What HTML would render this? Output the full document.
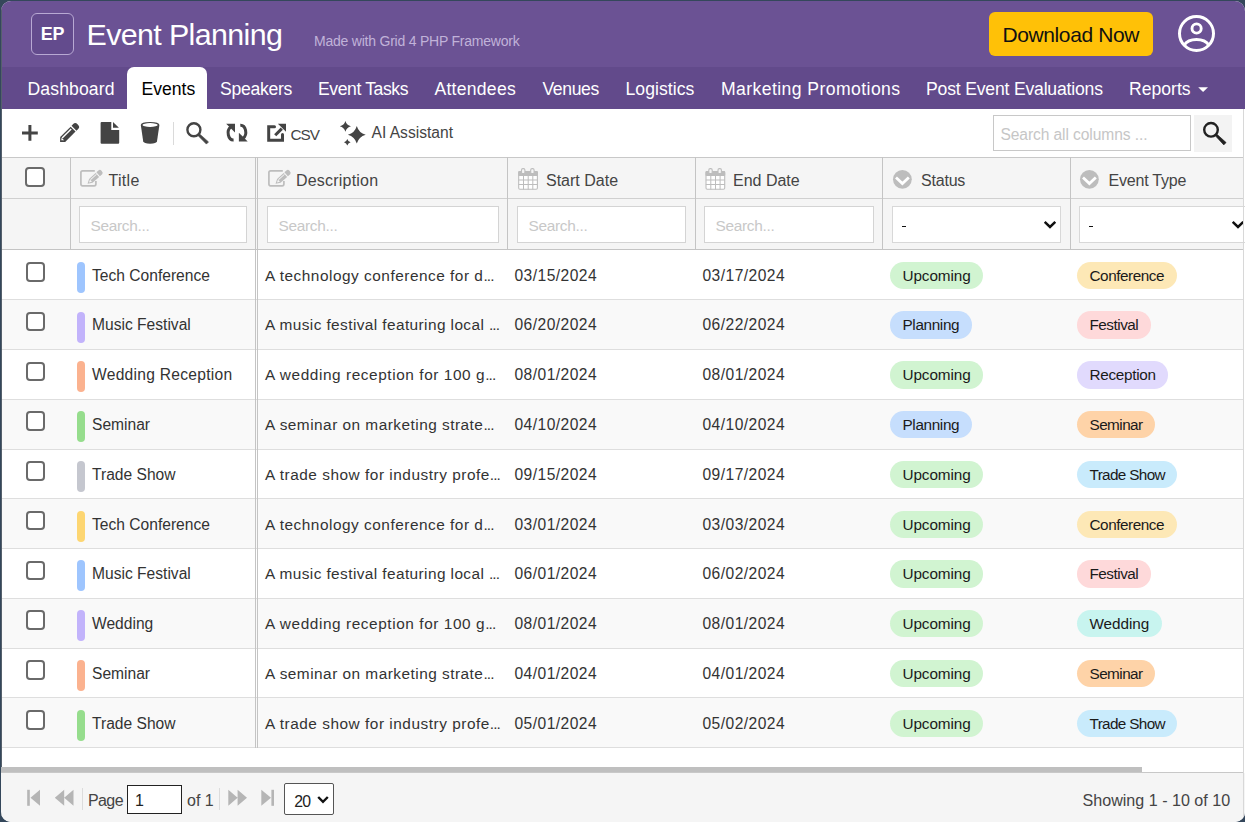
<!DOCTYPE html>
<html><head><meta charset="utf-8">
<style>
*{box-sizing:border-box;margin:0;padding:0}
html,body{width:1245px;height:822px;overflow:hidden}
body{background:#34475b;font-family:"Liberation Sans",sans-serif;position:relative}
#app{position:absolute;left:1px;top:1px;width:1243.5px;height:820.5px;border-radius:10px;overflow:hidden;background:#fff}
#app>div,#app>svg{position:absolute}
.t{white-space:nowrap}
</style></head>
<body>
<div id="app">
<div style="left:0px;top:0px;width:1245px;height:66px;background:#6b5294"></div>
<div style="left:30px;top:12px;width:43.2px;height:42.2px;border:1.9px solid #b8a9d3;border-radius:6px;background:#634b8d"></div>
<div class="t" style="left:29.5px;top:25.5px;width:44px;text-align:center;font-weight:bold;font-size:17.9px;line-height:14px;color:#fff;letter-spacing:-0.1px">EP</div>
<div class="t" style="left:85.5px;top:16.2px;font-size:30.4px;line-height:34px;color:#fff;letter-spacing:-0.62px">Event Planning</div>
<div class="t" style="left:313px;top:31.5px;font-size:14px;line-height:16px;color:#c1b2d9;letter-spacing:-0.22px">Made with Grid 4 PHP Framework</div>
<div style="left:988px;top:11px;width:164px;height:44px;background:#ffc107;border-radius:6px"></div>
<div class="t" style="left:1001.5px;top:23.2px;font-size:21px;line-height:22px;color:#111;letter-spacing:-0.4px">Download Now</div>
<svg style="left:1175px;top:12px" width="41" height="41" viewBox="1176 13 41 41"><circle cx="1196.5" cy="33.5" r="17" fill="none" stroke="#fff" stroke-width="3"/><circle cx="1196.6" cy="28.5" r="4.6" fill="none" stroke="#fff" stroke-width="2.9"/><path d="M1184.2 45 C1189 37.5 1204 37.5 1208.8 45" fill="none" stroke="#fff" stroke-width="3"/></svg>
<div style="left:0px;top:66px;width:1245px;height:42px;background:#624a8b"></div>
<div style="left:126px;top:66px;width:80px;height:42px;background:#fff;border-radius:7px 7px 0 0"></div>
<div class="t" style="left:26.5px;top:79px;font-size:17.6px;line-height:18px;color:#fff;letter-spacing:0.12px">Dashboard</div>
<div class="t" style="left:140.5px;top:79px;font-size:17.6px;line-height:18px;color:#000;letter-spacing:0px">Events</div>
<div class="t" style="left:219px;top:79px;font-size:17.6px;line-height:18px;color:#fff;letter-spacing:-0.28px">Speakers</div>
<div class="t" style="left:317px;top:79px;font-size:17.6px;line-height:18px;color:#fff;letter-spacing:-0.4px">Event Tasks</div>
<div class="t" style="left:433.5px;top:79px;font-size:17.6px;line-height:18px;color:#fff;letter-spacing:0.25px">Attendees</div>
<div class="t" style="left:541.5px;top:79px;font-size:17.6px;line-height:18px;color:#fff;letter-spacing:-0.4px">Venues</div>
<div class="t" style="left:624.5px;top:79px;font-size:17.6px;line-height:18px;color:#fff;letter-spacing:0.05px">Logistics</div>
<div class="t" style="left:720px;top:79px;font-size:17.6px;line-height:18px;color:#fff;letter-spacing:0.42px">Marketing Promotions</div>
<div class="t" style="left:925px;top:79px;font-size:17.6px;line-height:18px;color:#fff;letter-spacing:-0.19px">Post Event Evaluations</div>
<div class="t" style="left:1128px;top:79px;font-size:17.6px;line-height:18px;color:#fff;letter-spacing:0px">Reports</div>
<svg style="left:1196px;top:84px" width="13" height="9" viewBox="1197 85 13 9"><path d="M1198.2 87.2 L1203.1 92.1 L1208 87.2Z" fill="#fff"/></svg>
<div style="left:0px;top:108px;width:1243px;height:48px;background:#fff"></div>
<svg style="left:19px;top:122px" width="20" height="20" viewBox="20 123 20 20"><path d="M29.9 125V140.7M22 132.9H37.8" stroke="#444" stroke-width="3"/></svg>
<svg style="left:57px;top:119px" width="24" height="25" viewBox="58 120 24 25"><g transform="matrix(0.7071 -0.7071 0.7071 0.7071 101.1 101.1)"><path d="M-58 0 L-54.3 -3.5 H-39.6 V3.5 H-54.3Z" fill="#444"/><path d="M-55.9 -0.4 L-53.9 -2.1 V1.6Z" fill="#fff"/><rect x="-53.6" y="-2.2" width="12.8" height="1.4" fill="#fff"/><path d="M-38.3 -3.5 H-35.6 Q-33 -3.5 -33 0 Q-33 3.5 -35.6 3.5 H-38.3Z" fill="#444"/></g></svg>
<svg style="left:98px;top:120px" width="22" height="24" viewBox="99 121 22 24"><path d="M101.6 122 H111.3 V129.9 H119.2 V142.7 Q119.2 143.7 118.2 143.7 H101.6 Q100.6 143.7 100.6 142.7 V123 Q100.6 122 101.6 122Z" fill="#444"/><path d="M113 122 L118.9 127.8 H113Z" fill="#444"/></svg>
<svg style="left:138px;top:119px" width="22" height="26" viewBox="139 120 22 26"><path d="M140.8 125 Q140.8 122 150.1 122 Q159.4 122 159.4 125 L157 141.3 Q156.5 143.7 150.1 143.7 Q143.7 143.7 143.2 141.3Z" fill="#444"/><ellipse cx="150.1" cy="125" rx="7.6" ry="1.9" fill="#fff"/></svg>
<div style="left:171.5px;top:121px;width:1px;height:23px;background:#dadada"></div>
<svg style="left:183px;top:119px" width="26" height="26" viewBox="184 120 26 26"><circle cx="193.9" cy="129.7" r="6.5" fill="none" stroke="#444" stroke-width="2.4"/><path d="M197.7 135.3 L199.3 133.7 L208.5 141.9 L206.4 144.1Z" fill="#444" stroke="#444" stroke-width="0.6" stroke-linejoin="round"/></svg>
<svg style="left:223px;top:120px" width="26" height="24" viewBox="224 121 26 24"><path d="M230.85 126.9 A5.3 7 0 0 0 233.6 140" fill="none" stroke="#444" stroke-width="3"/><path d="M226.2 123.8 H235 V132.5Z" fill="#444"/><g transform="rotate(180 236.95 132.65)"><path d="M230.85 126.9 A5.3 7 0 0 0 233.6 140" fill="none" stroke="#444" stroke-width="3"/><path d="M226.2 123.8 H235 V132.5Z" fill="#444"/></g></svg>
<svg style="left:264px;top:120px" width="24" height="24" viewBox="265 121 24 24"><path d="M274.5 126.7 H268.7 V140.3 H282.5 V134.6" fill="none" stroke="#444" stroke-width="3" stroke-linecap="round" stroke-linejoin="miter"/><path d="M275.2 135.2 L281.8 128.6" stroke="#444" stroke-width="3"/><path d="M277.9 123.7 H286 V131.8Z" fill="#444"/></svg>
<div class="t" style="left:289.5px;top:125.5px;font-size:15.3px;line-height:16px;color:#444;letter-spacing:-1px">CSV</div>
<svg style="left:336px;top:117px" width="32" height="30" viewBox="337 118 32 30"><path d="M345.40 120.90 Q346.63 125.11 351.00 126.30 Q346.63 127.49 345.40 131.70 Q344.17 127.49 339.80 126.30 Q344.17 125.11 345.40 120.90Z M356.80 126.00 Q358.76 132.86 365.70 134.80 Q358.76 136.74 356.80 143.60 Q354.84 136.74 347.90 134.80 Q354.84 132.86 356.80 126.00Z M347.30 138.90 Q348.03 141.47 350.60 142.20 Q348.03 142.93 347.30 145.50 Q346.57 142.93 344.00 142.20 Q346.57 141.47 347.30 138.90Z" fill="#444"/></svg>
<div class="t" style="left:370.5px;top:124px;font-size:15.6px;line-height:16px;color:#444">AI Assistant</div>
<div style="left:992px;top:114px;width:198px;height:36px;border:1px solid #c8c8c8;background:#fff"></div>
<div class="t" style="left:999.5px;top:126px;font-size:15.6px;line-height:16px;color:#c6c6c6;letter-spacing:-0.1px">Search all columns ...</div>
<div style="left:1193px;top:114px;width:38px;height:37px;background:#f3f3f3"></div>
<svg style="left:1199px;top:118px" width="28" height="28" viewBox="1200 119 28 28"><circle cx="1211" cy="129.8" r="6.8" fill="none" stroke="#222" stroke-width="2.4"/><path d="M1215.1 135.6 L1216.7 134 L1226.1 142.6 L1223.8 144.9Z" fill="#222" stroke="#222" stroke-width="0.6" stroke-linejoin="round"/></svg>
<div style="left:0px;top:156px;width:1243px;height:92px;background:#f5f5f5"></div>
<div style="left:0px;top:156px;width:1243px;height:1px;background:#c8c8c8"></div>
<div style="left:0px;top:197px;width:1243px;height:1px;background:#d0d0d0"></div>
<div style="left:0px;top:248px;width:1243px;height:1.5px;background:#c4c4c4"></div>
<div style="left:69px;top:156px;width:1.2px;height:92px;background:#c4c4c4"></div>
<div style="left:506px;top:156px;width:1.2px;height:92px;background:#c4c4c4"></div>
<div style="left:694px;top:156px;width:1.2px;height:92px;background:#c4c4c4"></div>
<div style="left:881px;top:156px;width:1.2px;height:92px;background:#c4c4c4"></div>
<div style="left:1069px;top:156px;width:1.2px;height:92px;background:#c4c4c4"></div>
<div style="left:24px;top:166px;width:19.5px;height:19.5px;border:2.1px solid #6a6a6a;border-radius:4px;background:#fff"></div>
<svg style="left:77px;top:166px" width="26" height="22" viewBox="78 167 26 22"><g transform="translate(0 0)"><path d="M94.8 170.8 H82.6 Q80.9 170.8 80.9 172.5 V184.1 Q80.9 185.8 82.6 185.8 H94.2 Q95.9 185.8 95.9 184.1 V181" fill="none" stroke="#bdbdbd" stroke-width="1.7"/><g transform="translate(87.6 183.8) rotate(-42)"><path d="M0 0 L4.3 -2.6 H13.2 V2.6 H4.3Z" fill="#bdbdbd"/><path d="M1.9 -0.1 L4.6 -1.5 V1.4Z" fill="#f5f5f5"/><rect x="5" y="-1.6" width="8" height="0.9" fill="#f5f5f5"/><path d="M14.2 -2.6 H17.3 Q19 -2.6 19 0 Q19 2.6 17.3 2.6 H14.2Z" fill="#bdbdbd"/></g></g></svg>
<div class="t" style="left:107.5px;top:170.5px;font-size:16px;line-height:18px;color:#444;letter-spacing:0.3px">Title</div>
<svg style="left:265px;top:166px" width="26" height="22" viewBox="266 167 26 22"><g transform="translate(188 0)"><path d="M94.8 170.8 H82.6 Q80.9 170.8 80.9 172.5 V184.1 Q80.9 185.8 82.6 185.8 H94.2 Q95.9 185.8 95.9 184.1 V181" fill="none" stroke="#bdbdbd" stroke-width="1.7"/><g transform="translate(87.6 183.8) rotate(-42)"><path d="M0 0 L4.3 -2.6 H13.2 V2.6 H4.3Z" fill="#bdbdbd"/><path d="M1.9 -0.1 L4.6 -1.5 V1.4Z" fill="#f5f5f5"/><rect x="5" y="-1.6" width="8" height="0.9" fill="#f5f5f5"/><path d="M14.2 -2.6 H17.3 Q19 -2.6 19 0 Q19 2.6 17.3 2.6 H14.2Z" fill="#bdbdbd"/></g></g></svg>
<div class="t" style="left:295px;top:170.5px;font-size:16px;line-height:18px;color:#444;letter-spacing:0.2px">Description</div>
<svg style="left:515px;top:165px" width="24" height="26" viewBox="516 166 24 26"><g transform="translate(0 0)"><rect x="518.7" y="171.6" width="18.7" height="17.6" rx="1.2" fill="#fff" stroke="#bdbdbd" stroke-width="1.1"/><rect x="518.2" y="171.1" width="19.7" height="4.8" rx="1" fill="#bdbdbd"/><path d="M523.5 175.5V189.5M528.2 175.5V189.5M532.8 175.5V189.5M518.5 180H537.5M518.5 184.5H537.5" stroke="#bdbdbd" stroke-width="1"/><rect x="521.5" y="168.6" width="3.4" height="5" rx="1.4" fill="#f5f5f5" stroke="#bdbdbd" stroke-width="1.1"/><rect x="530.7" y="168.6" width="3.4" height="5" rx="1.4" fill="#f5f5f5" stroke="#bdbdbd" stroke-width="1.1"/></g></svg>
<div class="t" style="left:545px;top:170.5px;font-size:16px;line-height:18px;color:#444">Start Date</div>
<svg style="left:702px;top:165px" width="24" height="26" viewBox="703 166 24 26"><g transform="translate(187.3 0)"><rect x="518.7" y="171.6" width="18.7" height="17.6" rx="1.2" fill="#fff" stroke="#bdbdbd" stroke-width="1.1"/><rect x="518.2" y="171.1" width="19.7" height="4.8" rx="1" fill="#bdbdbd"/><path d="M523.5 175.5V189.5M528.2 175.5V189.5M532.8 175.5V189.5M518.5 180H537.5M518.5 184.5H537.5" stroke="#bdbdbd" stroke-width="1"/><rect x="521.5" y="168.6" width="3.4" height="5" rx="1.4" fill="#f5f5f5" stroke="#bdbdbd" stroke-width="1.1"/><rect x="530.7" y="168.6" width="3.4" height="5" rx="1.4" fill="#f5f5f5" stroke="#bdbdbd" stroke-width="1.1"/></g></svg>
<div class="t" style="left:732px;top:170.5px;font-size:16px;line-height:18px;color:#444">End Date</div>
<svg style="left:890px;top:167px" width="23" height="23" viewBox="891 168 23 23"><circle cx="902.4" cy="179.3" r="9.4" fill="#bdbdbd"/><path d="M896 177.6 L902.4 183.6 L908.8 177.6" fill="none" stroke="#fff" stroke-width="2.8"/></svg>
<div class="t" style="left:920px;top:170.5px;font-size:16px;line-height:18px;color:#444;letter-spacing:-0.2px">Status</div>
<svg style="left:1077px;top:167px" width="23" height="23" viewBox="1078 168 23 23"><circle cx="1089.4" cy="179.3" r="9.4" fill="#bdbdbd"/><path d="M1083 177.6 L1089.4 183.6 L1095.8 177.6" fill="none" stroke="#fff" stroke-width="2.8"/></svg>
<div class="t" style="left:1107.5px;top:170.5px;font-size:16px;line-height:18px;color:#444;letter-spacing:-0.2px">Event Type</div>
<div style="left:78px;top:205px;width:168px;height:37px;border:1px solid #d4d4d4;background:#fff"></div>
<div class="t" style="left:89.5px;top:217px;font-size:15.4px;line-height:16px;color:#c8c8c8;letter-spacing:-0.3px">Search...</div>
<div style="left:266px;top:205px;width:232px;height:37px;border:1px solid #d4d4d4;background:#fff"></div>
<div class="t" style="left:277.5px;top:217px;font-size:15.4px;line-height:16px;color:#c8c8c8;letter-spacing:-0.3px">Search...</div>
<div style="left:516px;top:205px;width:169px;height:37px;border:1px solid #d4d4d4;background:#fff"></div>
<div class="t" style="left:527.5px;top:217px;font-size:15.4px;line-height:16px;color:#c8c8c8;letter-spacing:-0.3px">Search...</div>
<div style="left:703px;top:205px;width:170px;height:37px;border:1px solid #d4d4d4;background:#fff"></div>
<div class="t" style="left:714.5px;top:217px;font-size:15.4px;line-height:16px;color:#c8c8c8;letter-spacing:-0.3px">Search...</div>
<div style="left:891px;top:205px;width:169px;height:37px;border:1.5px solid #d8d8d8;background:#fff"></div>
<div style="left:900.5px;top:224.9px;width:4.8px;height:1.3px;background:#111"></div>
<svg style="left:1042px;top:218px" width="14" height="11" viewBox="1043 219 14 11"><path d="M1044.7 221.8 L1050 226.9 L1055.3 221.8" fill="none" stroke="#111" stroke-width="2.5"/></svg>
<div style="left:1078px;top:205px;width:181px;height:37px;border:1.5px solid #d8d8d8;background:#fff"></div>
<div style="left:1087.5px;top:224.9px;width:4.8px;height:1.3px;background:#111"></div>
<svg style="left:1230px;top:218px" width="14" height="11" viewBox="1231 219 14 11"><path d="M1232.7 221.8 L1238 226.9 L1243.3 221.8" fill="none" stroke="#111" stroke-width="2.5"/></svg>
<div style="left:0px;top:249.4px;width:1243px;height:49.78px;background:#fff"></div>
<div style="left:0px;top:298.18px;width:1243px;height:1px;background:#dedede"></div>
<div style="left:24.8px;top:261px;width:19.5px;height:19.5px;border:2.1px solid #6a6a6a;border-radius:4px;background:#fff"></div>
<div style="left:76px;top:260.8px;width:8px;height:31px;background:#9ec5fe;border-radius:4px"></div>
<div class="t" style="left:91px;top:266.7px;font-size:15.6px;line-height:16px;color:#333;letter-spacing:0px">Tech Conference</div>
<div class="t" style="left:264px;top:266.7px;font-size:15.4px;line-height:16px;color:#333;letter-spacing:0.51px">A technology conference for d<span style="letter-spacing:-0.9px">...</span></div>
<div class="t" style="left:513.5px;top:266.7px;font-size:15.6px;line-height:16px;color:#333;letter-spacing:0.45px">03/15/2024</div>
<div class="t" style="left:701.5px;top:266.7px;font-size:15.6px;line-height:16px;color:#333;letter-spacing:0.45px">03/17/2024</div>
<div class="t" style="left:889px;top:260.6px;height:27.4px;border-radius:13.7px;background:#d1f4d1;font-size:15.3px;line-height:27px;padding:0 12.5px;color:#1a1a1a;letter-spacing:-0.1px">Upcoming</div>
<div class="t" style="left:1076px;top:260.6px;height:27.4px;border-radius:13.7px;background:#fde8b6;font-size:15.3px;line-height:27px;padding:0 12.5px;color:#1a1a1a;letter-spacing:-0.45px">Conference</div>
<div style="left:0px;top:299.18px;width:1243px;height:49.78px;background:#f9f9f9"></div>
<div style="left:0px;top:347.96px;width:1243px;height:1px;background:#dedede"></div>
<div style="left:24.8px;top:310.78px;width:19.5px;height:19.5px;border:2.1px solid #6a6a6a;border-radius:4px;background:#fff"></div>
<div style="left:76px;top:310.58px;width:8px;height:31px;background:#c2b3fb;border-radius:4px"></div>
<div class="t" style="left:91px;top:316.48px;font-size:15.6px;line-height:16px;color:#333;letter-spacing:0px">Music Festival</div>
<div class="t" style="left:264px;top:316.48px;font-size:15.4px;line-height:16px;color:#333;letter-spacing:0.41px">A music festival featuring local <span style="letter-spacing:-0.9px">...</span></div>
<div class="t" style="left:513.5px;top:316.48px;font-size:15.6px;line-height:16px;color:#333;letter-spacing:0.45px">06/20/2024</div>
<div class="t" style="left:701.5px;top:316.48px;font-size:15.6px;line-height:16px;color:#333;letter-spacing:0.45px">06/22/2024</div>
<div class="t" style="left:889px;top:310.38px;height:27.4px;border-radius:13.7px;background:#c6defd;font-size:15.3px;line-height:27px;padding:0 12.5px;color:#1a1a1a;letter-spacing:-0.35px">Planning</div>
<div class="t" style="left:1076px;top:310.38px;height:27.4px;border-radius:13.7px;background:#fed9da;font-size:15.3px;line-height:27px;padding:0 12.5px;color:#1a1a1a;letter-spacing:-0.5px">Festival</div>
<div style="left:0px;top:348.96px;width:1243px;height:49.78px;background:#fff"></div>
<div style="left:0px;top:397.74px;width:1243px;height:1px;background:#dedede"></div>
<div style="left:24.8px;top:360.56px;width:19.5px;height:19.5px;border:2.1px solid #6a6a6a;border-radius:4px;background:#fff"></div>
<div style="left:76px;top:360.36px;width:8px;height:31px;background:#fbb28f;border-radius:4px"></div>
<div class="t" style="left:91px;top:366.26px;font-size:15.6px;line-height:16px;color:#333;letter-spacing:0.27px">Wedding Reception</div>
<div class="t" style="left:264px;top:366.26px;font-size:15.4px;line-height:16px;color:#333;letter-spacing:0.57px">A wedding reception for 100 g<span style="letter-spacing:-0.9px">...</span></div>
<div class="t" style="left:513.5px;top:366.26px;font-size:15.6px;line-height:16px;color:#333;letter-spacing:0.45px">08/01/2024</div>
<div class="t" style="left:701.5px;top:366.26px;font-size:15.6px;line-height:16px;color:#333;letter-spacing:0.45px">08/01/2024</div>
<div class="t" style="left:889px;top:360.16px;height:27.4px;border-radius:13.7px;background:#d1f4d1;font-size:15.3px;line-height:27px;padding:0 12.5px;color:#1a1a1a;letter-spacing:-0.1px">Upcoming</div>
<div class="t" style="left:1076px;top:360.16px;height:27.4px;border-radius:13.7px;background:#e1dafd;font-size:15.3px;line-height:27px;padding:0 12.5px;color:#1a1a1a;letter-spacing:-0.3px">Reception</div>
<div style="left:0px;top:398.74px;width:1243px;height:49.78px;background:#f9f9f9"></div>
<div style="left:0px;top:447.52px;width:1243px;height:1px;background:#dedede"></div>
<div style="left:24.8px;top:410.34px;width:19.5px;height:19.5px;border:2.1px solid #6a6a6a;border-radius:4px;background:#fff"></div>
<div style="left:76px;top:410.14px;width:8px;height:31px;background:#96dd8d;border-radius:4px"></div>
<div class="t" style="left:91px;top:416.04px;font-size:15.6px;line-height:16px;color:#333;letter-spacing:0px">Seminar</div>
<div class="t" style="left:264px;top:416.04px;font-size:15.4px;line-height:16px;color:#333;letter-spacing:0.48px">A seminar on marketing strate<span style="letter-spacing:-0.9px">...</span></div>
<div class="t" style="left:513.5px;top:416.04px;font-size:15.6px;line-height:16px;color:#333;letter-spacing:0.45px">04/10/2024</div>
<div class="t" style="left:701.5px;top:416.04px;font-size:15.6px;line-height:16px;color:#333;letter-spacing:0.45px">04/10/2024</div>
<div class="t" style="left:889px;top:409.94px;height:27.4px;border-radius:13.7px;background:#c6defd;font-size:15.3px;line-height:27px;padding:0 12.5px;color:#1a1a1a;letter-spacing:-0.35px">Planning</div>
<div class="t" style="left:1076px;top:409.94px;height:27.4px;border-radius:13.7px;background:#fed3a8;font-size:15.3px;line-height:27px;padding:0 12.5px;color:#1a1a1a;letter-spacing:-0.55px">Seminar</div>
<div style="left:0px;top:448.52px;width:1243px;height:49.78px;background:#fff"></div>
<div style="left:0px;top:497.3px;width:1243px;height:1px;background:#dedede"></div>
<div style="left:24.8px;top:460.12px;width:19.5px;height:19.5px;border:2.1px solid #6a6a6a;border-radius:4px;background:#fff"></div>
<div style="left:76px;top:459.92px;width:8px;height:31px;background:#c5c7cf;border-radius:4px"></div>
<div class="t" style="left:91px;top:465.82px;font-size:15.6px;line-height:16px;color:#333;letter-spacing:0px">Trade Show</div>
<div class="t" style="left:264px;top:465.82px;font-size:15.4px;line-height:16px;color:#333;letter-spacing:0.52px">A trade show for industry profe<span style="letter-spacing:-0.9px">...</span></div>
<div class="t" style="left:513.5px;top:465.82px;font-size:15.6px;line-height:16px;color:#333;letter-spacing:0.45px">09/15/2024</div>
<div class="t" style="left:701.5px;top:465.82px;font-size:15.6px;line-height:16px;color:#333;letter-spacing:0.45px">09/17/2024</div>
<div class="t" style="left:889px;top:459.72px;height:27.4px;border-radius:13.7px;background:#d1f4d1;font-size:15.3px;line-height:27px;padding:0 12.5px;color:#1a1a1a;letter-spacing:-0.1px">Upcoming</div>
<div class="t" style="left:1076px;top:459.72px;height:27.4px;border-radius:13.7px;background:#c9ebfc;font-size:15.3px;line-height:27px;padding:0 12.5px;color:#1a1a1a;letter-spacing:-0.65px">Trade Show</div>
<div style="left:0px;top:498.3px;width:1243px;height:49.78px;background:#f9f9f9"></div>
<div style="left:0px;top:547.08px;width:1243px;height:1px;background:#dedede"></div>
<div style="left:24.8px;top:509.9px;width:19.5px;height:19.5px;border:2.1px solid #6a6a6a;border-radius:4px;background:#fff"></div>
<div style="left:76px;top:509.7px;width:8px;height:31px;background:#fdd672;border-radius:4px"></div>
<div class="t" style="left:91px;top:515.6px;font-size:15.6px;line-height:16px;color:#333;letter-spacing:0px">Tech Conference</div>
<div class="t" style="left:264px;top:515.6px;font-size:15.4px;line-height:16px;color:#333;letter-spacing:0.51px">A technology conference for d<span style="letter-spacing:-0.9px">...</span></div>
<div class="t" style="left:513.5px;top:515.6px;font-size:15.6px;line-height:16px;color:#333;letter-spacing:0.45px">03/01/2024</div>
<div class="t" style="left:701.5px;top:515.6px;font-size:15.6px;line-height:16px;color:#333;letter-spacing:0.45px">03/03/2024</div>
<div class="t" style="left:889px;top:509.5px;height:27.4px;border-radius:13.7px;background:#d1f4d1;font-size:15.3px;line-height:27px;padding:0 12.5px;color:#1a1a1a;letter-spacing:-0.1px">Upcoming</div>
<div class="t" style="left:1076px;top:509.5px;height:27.4px;border-radius:13.7px;background:#fde8b6;font-size:15.3px;line-height:27px;padding:0 12.5px;color:#1a1a1a;letter-spacing:-0.45px">Conference</div>
<div style="left:0px;top:548.08px;width:1243px;height:49.78px;background:#fff"></div>
<div style="left:0px;top:596.86px;width:1243px;height:1px;background:#dedede"></div>
<div style="left:24.8px;top:559.68px;width:19.5px;height:19.5px;border:2.1px solid #6a6a6a;border-radius:4px;background:#fff"></div>
<div style="left:76px;top:559.48px;width:8px;height:31px;background:#9ec5fe;border-radius:4px"></div>
<div class="t" style="left:91px;top:565.38px;font-size:15.6px;line-height:16px;color:#333;letter-spacing:0px">Music Festival</div>
<div class="t" style="left:264px;top:565.38px;font-size:15.4px;line-height:16px;color:#333;letter-spacing:0.41px">A music festival featuring local <span style="letter-spacing:-0.9px">...</span></div>
<div class="t" style="left:513.5px;top:565.38px;font-size:15.6px;line-height:16px;color:#333;letter-spacing:0.45px">06/01/2024</div>
<div class="t" style="left:701.5px;top:565.38px;font-size:15.6px;line-height:16px;color:#333;letter-spacing:0.45px">06/02/2024</div>
<div class="t" style="left:889px;top:559.28px;height:27.4px;border-radius:13.7px;background:#d1f4d1;font-size:15.3px;line-height:27px;padding:0 12.5px;color:#1a1a1a;letter-spacing:-0.1px">Upcoming</div>
<div class="t" style="left:1076px;top:559.28px;height:27.4px;border-radius:13.7px;background:#fed9da;font-size:15.3px;line-height:27px;padding:0 12.5px;color:#1a1a1a;letter-spacing:-0.5px">Festival</div>
<div style="left:0px;top:597.86px;width:1243px;height:49.78px;background:#f9f9f9"></div>
<div style="left:0px;top:646.64px;width:1243px;height:1px;background:#dedede"></div>
<div style="left:24.8px;top:609.46px;width:19.5px;height:19.5px;border:2.1px solid #6a6a6a;border-radius:4px;background:#fff"></div>
<div style="left:76px;top:609.26px;width:8px;height:31px;background:#c2b3fb;border-radius:4px"></div>
<div class="t" style="left:91px;top:615.16px;font-size:15.6px;line-height:16px;color:#333;letter-spacing:0px">Wedding</div>
<div class="t" style="left:264px;top:615.16px;font-size:15.4px;line-height:16px;color:#333;letter-spacing:0.57px">A wedding reception for 100 g<span style="letter-spacing:-0.9px">...</span></div>
<div class="t" style="left:513.5px;top:615.16px;font-size:15.6px;line-height:16px;color:#333;letter-spacing:0.45px">08/01/2024</div>
<div class="t" style="left:701.5px;top:615.16px;font-size:15.6px;line-height:16px;color:#333;letter-spacing:0.45px">08/01/2024</div>
<div class="t" style="left:889px;top:609.06px;height:27.4px;border-radius:13.7px;background:#d1f4d1;font-size:15.3px;line-height:27px;padding:0 12.5px;color:#1a1a1a;letter-spacing:-0.1px">Upcoming</div>
<div class="t" style="left:1076px;top:609.06px;height:27.4px;border-radius:13.7px;background:#c8f4ef;font-size:15.3px;line-height:27px;padding:0 12.5px;color:#1a1a1a;letter-spacing:-0.05px">Wedding</div>
<div style="left:0px;top:647.64px;width:1243px;height:49.78px;background:#fff"></div>
<div style="left:0px;top:696.42px;width:1243px;height:1px;background:#dedede"></div>
<div style="left:24.8px;top:659.24px;width:19.5px;height:19.5px;border:2.1px solid #6a6a6a;border-radius:4px;background:#fff"></div>
<div style="left:76px;top:659.04px;width:8px;height:31px;background:#fbb28f;border-radius:4px"></div>
<div class="t" style="left:91px;top:664.94px;font-size:15.6px;line-height:16px;color:#333;letter-spacing:0px">Seminar</div>
<div class="t" style="left:264px;top:664.94px;font-size:15.4px;line-height:16px;color:#333;letter-spacing:0.48px">A seminar on marketing strate<span style="letter-spacing:-0.9px">...</span></div>
<div class="t" style="left:513.5px;top:664.94px;font-size:15.6px;line-height:16px;color:#333;letter-spacing:0.45px">04/01/2024</div>
<div class="t" style="left:701.5px;top:664.94px;font-size:15.6px;line-height:16px;color:#333;letter-spacing:0.45px">04/01/2024</div>
<div class="t" style="left:889px;top:658.84px;height:27.4px;border-radius:13.7px;background:#d1f4d1;font-size:15.3px;line-height:27px;padding:0 12.5px;color:#1a1a1a;letter-spacing:-0.1px">Upcoming</div>
<div class="t" style="left:1076px;top:658.84px;height:27.4px;border-radius:13.7px;background:#fed3a8;font-size:15.3px;line-height:27px;padding:0 12.5px;color:#1a1a1a;letter-spacing:-0.55px">Seminar</div>
<div style="left:0px;top:697.42px;width:1243px;height:49.78px;background:#f9f9f9"></div>
<div style="left:0px;top:746.2px;width:1243px;height:1px;background:#dedede"></div>
<div style="left:24.8px;top:709.02px;width:19.5px;height:19.5px;border:2.1px solid #6a6a6a;border-radius:4px;background:#fff"></div>
<div style="left:76px;top:708.82px;width:8px;height:31px;background:#96dd8d;border-radius:4px"></div>
<div class="t" style="left:91px;top:714.72px;font-size:15.6px;line-height:16px;color:#333;letter-spacing:0px">Trade Show</div>
<div class="t" style="left:264px;top:714.72px;font-size:15.4px;line-height:16px;color:#333;letter-spacing:0.52px">A trade show for industry profe<span style="letter-spacing:-0.9px">...</span></div>
<div class="t" style="left:513.5px;top:714.72px;font-size:15.6px;line-height:16px;color:#333;letter-spacing:0.45px">05/01/2024</div>
<div class="t" style="left:701.5px;top:714.72px;font-size:15.6px;line-height:16px;color:#333;letter-spacing:0.45px">05/02/2024</div>
<div class="t" style="left:889px;top:708.62px;height:27.4px;border-radius:13.7px;background:#d1f4d1;font-size:15.3px;line-height:27px;padding:0 12.5px;color:#1a1a1a;letter-spacing:-0.1px">Upcoming</div>
<div class="t" style="left:1076px;top:708.62px;height:27.4px;border-radius:13.7px;background:#c9ebfc;font-size:15.3px;line-height:27px;padding:0 12.5px;color:#1a1a1a;letter-spacing:-0.65px">Trade Show</div>
<div style="left:254px;top:156px;width:1px;height:591px;background:#c4c4c4"></div>
<div style="left:256px;top:156px;width:1px;height:591px;background:#c4c4c4"></div>
<div style="left:0px;top:-1px;width:0.7px;height:822px;background:#55606c"></div>
<div style="left:0px;top:772px;width:1245px;height:50px;background:#f5f5f5"></div>
<div style="left:0px;top:766px;width:1141px;height:5.3px;background:#bfbfbf"></div>
<div style="left:0px;top:771.2px;width:1243px;height:1px;background:#c8c8c8"></div>
<svg style="left:24px;top:787px" width="18" height="20" viewBox="25 788 18 20"><rect x="27.2" y="789.8" width="2.6" height="16" fill="#b5b5b5"/><path d="M40 789.8 V805.8 L30.5 797.8Z" fill="#b5b5b5"/></svg>
<svg style="left:52px;top:787px" width="22" height="20" viewBox="53 788 22 20"><path d="M64.2 789.8 V805.8 L54.8 797.8Z M73.5 789.8 V805.8 L64.2 797.8Z" fill="#b5b5b5"/></svg>
<div style="left:80.5px;top:787px;width:1.2px;height:22px;background:#dcdcdc"></div>
<div class="t" style="left:87px;top:792.2px;font-size:16px;line-height:16px;color:#444;letter-spacing:-0.6px">Page</div>
<div style="left:126px;top:783.5px;width:55px;height:29.5px;border:1.6px solid #222;background:#fff"></div>
<div class="t" style="left:134px;top:792.2px;font-size:16px;line-height:16px;color:#222">1</div>
<div class="t" style="left:186px;top:792.2px;font-size:16px;line-height:16px;color:#444">of 1</div>
<div style="left:217.5px;top:787px;width:1.2px;height:22px;background:#dcdcdc"></div>
<svg style="left:226px;top:787px" width="22" height="20" viewBox="227 788 22 20"><path d="M228.3 789.8 V805.8 L237.6 797.8Z M237.6 789.8 V805.8 L247 797.8Z" fill="#b5b5b5"/></svg>
<svg style="left:259px;top:787px" width="18" height="20" viewBox="260 788 18 20"><path d="M261.3 789.8 V805.8 L271 797.8Z" fill="#b5b5b5"/><rect x="271.4" y="789.8" width="2.6" height="16" fill="#b5b5b5"/></svg>
<div style="left:283px;top:782px;width:50px;height:32px;border:1.3px solid #555;border-radius:2px;background:#fff"></div>
<div class="t" style="left:293.2px;top:792.5px;font-size:15.8px;line-height:16px;color:#222;letter-spacing:-0.8px">20</div>
<svg style="left:315px;top:793px" width="14" height="11" viewBox="316 794 14 11"><path d="M318.2 797 L323 801.8 L327.8 797" fill="none" stroke="#111" stroke-width="2.4"/></svg>
<div style="left:1242px;top:108px;width:1px;height:720px;background:#d8d8d8"></div>
<div class="t" style="left:1081.5px;top:791px;font-size:16.1px;line-height:16px;color:#444">Showing 1 - 10 of 10</div>
</div>
</body></html>
